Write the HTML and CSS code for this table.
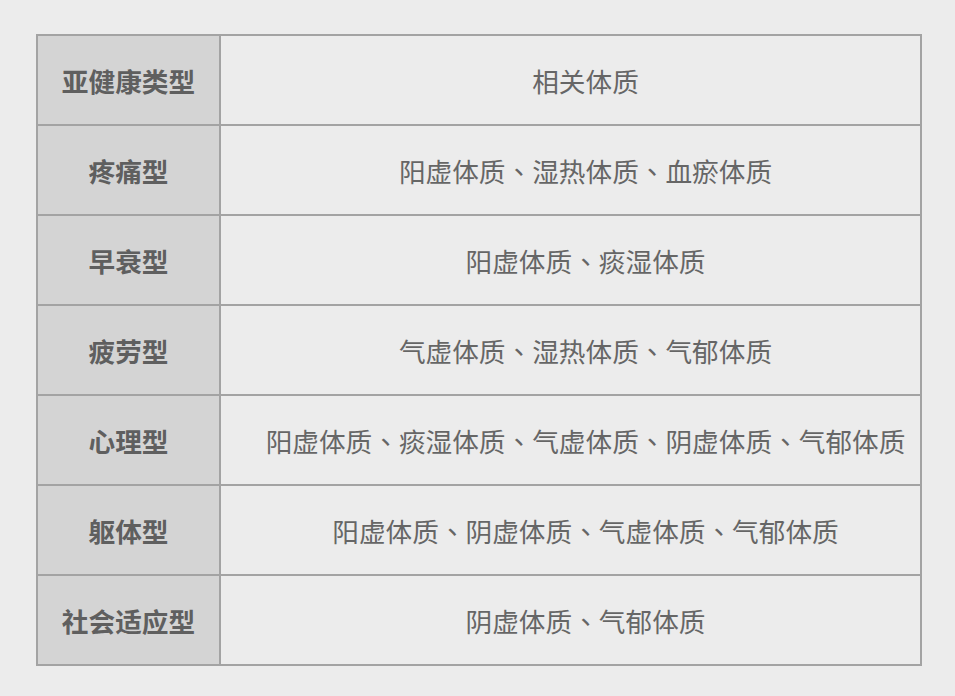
FILE: index.html
```html
<!DOCTYPE html>
<html lang="zh-CN">
<head>
<meta charset="utf-8">
<title>亚健康类型</title>
<link rel="stylesheet" href="styles.css">
</head>
<body>
<table class="tbl">
  <tr><th class="type">亚健康类型</th><td class="body">相关体质</td></tr>
  <tr><th class="type">疼痛型</th><td class="body">阳虚体质<span class="sep" lang="zh-TW">、</span>湿热体质<span class="sep" lang="zh-TW">、</span>血瘀体质</td></tr>
  <tr><th class="type">早衰型</th><td class="body">阳虚体质<span class="sep" lang="zh-TW">、</span>痰湿体质</td></tr>
  <tr><th class="type">疲劳型</th><td class="body">气虚体质<span class="sep" lang="zh-TW">、</span>湿热体质<span class="sep" lang="zh-TW">、</span>气郁体质</td></tr>
  <tr><th class="type">心理型</th><td class="body">阳虚体质<span class="sep" lang="zh-TW">、</span>痰湿体质<span class="sep" lang="zh-TW">、</span>气虚体质<span class="sep" lang="zh-TW">、</span>阴虚体质<span class="sep" lang="zh-TW">、</span>气郁体质</td></tr>
  <tr><th class="type">躯体型</th><td class="body">阳虚体质<span class="sep" lang="zh-TW">、</span>阴虚体质<span class="sep" lang="zh-TW">、</span>气虚体质<span class="sep" lang="zh-TW">、</span>气郁体质</td></tr>
  <tr><th class="type">社会适应型</th><td class="body">阴虚体质<span class="sep" lang="zh-TW">、</span>气郁体质</td></tr>
</table>
</body>
</html>
```
FILE: styles.css
```css
html, body {
  margin: 0;
  padding: 0;
  background: #ececec;
}
body {
  padding: 34px 0 0 36px;
  font-family: "Noto Sans CJK SC", "Noto Sans", sans-serif;
}
.tbl {
  border-collapse: collapse;
  width: 886px;
  table-layout: fixed;
}
.tbl th, .tbl td {
  border: 2px solid #a3a3a3;
  height: 90px;
  padding: 0;
  box-sizing: border-box;
  text-align: center;
  vertical-align: middle;
  white-space: nowrap;
}
.type {
  width: 183px;
  background: #d4d4d4;
  color: #5f5f5f;
  font-weight: 700;
  font-size: 26.67px;
}
.body {
  background: #ececec;
  color: #666666;
  font-weight: 400;
  font-size: 26.67px;
  padding-left: 30px !important;
}
.sep {
  font-family: "Noto Sans CJK TC", "Noto Sans CJK SC", sans-serif;
}
```
